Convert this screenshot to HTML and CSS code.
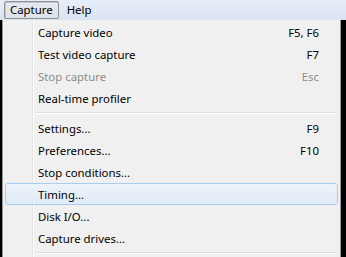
FILE: index.html
```html
<!DOCTYPE html>
<html>
<head>
<meta charset="utf-8">
<link rel="stylesheet" href="styles.css">
</head>
<body>
<div class="screen">
  <div class="menubar">
    <span class="top open">Capture</span>
    <span class="top">Help</span>
  </div>
  <div class="stage">
    <div class="menu">
      <div class="item"><span class="label">Capture video</span><span class="key">F5, F6</span></div>
      <div class="item"><span class="label">Test video capture</span><span class="key">F7</span></div>
      <div class="item disabled"><span class="label">Stop capture</span><span class="key">Esc</span></div>
      <div class="item"><span class="label">Real-time profiler</span><span class="key"></span></div>
      <div class="sep"></div>
      <div class="item"><span class="label">Settings...</span><span class="key">F9</span></div>
      <div class="item"><span class="label">Preferences...</span><span class="key">F10</span></div>
      <div class="item"><span class="label">Stop conditions...</span><span class="key"></span></div>
      <div class="item hover"><span class="label">Timing...</span><span class="key"></span></div>
      <div class="item"><span class="label">Disk I/O...</span><span class="key"></span></div>
      <div class="item"><span class="label">Capture drives...</span><span class="key"></span></div>
      <div class="sep"></div>
    </div>
  </div>
</div>
</body>
</html>
```
FILE: styles.css
```css
html, body {
  margin: 0;
  padding: 0;
  background: #000;
}
.screen {
  width: 346px;
  height: 257px;
  overflow: hidden;
  font-family: "Noto Sans", sans-serif;
  font-size: 11.4px;
  color: #000;
}
.menubar {
  height: 20px;
  background: linear-gradient(#e6eef8, #d9e4f1);
  display: flex;
  align-items: center;
  padding-left: 4px;
  gap: 2px;
  box-sizing: border-box;
}
.top {
  height: 18px;
  line-height: 16px;
  padding: 0 5px;
  box-sizing: border-box;
  border: 1px solid transparent;
}
.top.open {
  border-color: #8e8f8f;
  border-radius: 2px;
  background: linear-gradient(#e4e9ef, #dde3ea);
  box-shadow: inset 1px 1px 0 #c5c9cf;
}
.stage {
  padding-left: 2px;
}
.menu {
  width: 339px;
  background: #f0f0f0;
  border: 1px solid #979797;
  border-top: none;
  padding: 1px 2px 0 2px;
  box-sizing: border-box;
  background-image: linear-gradient(to right, transparent 29px, #e2e3e3 29px, #e2e3e3 30px, #fff 30px, #fff 31px, transparent 31px);
}
.item {
  height: 22px;
  display: flex;
  align-items: center;
  padding-left: 32px;
  padding-right: 18px;
  border: 1px solid transparent;
  border-radius: 3px;
  box-sizing: border-box;
}
.label { flex: 1; }
.key { text-align: right; }
.disabled { color: #8d8d8d; }
.hover {
  border-color: #a8cdf0;
  background: linear-gradient(rgba(235,243,252,0.8), rgba(220,234,250,0.8));
}
.sep {
  height: 1px;
  margin: 3px 0 3px 30px;
  background: #e0e0e0;
  border-bottom: 1px solid #fff;
}
```
